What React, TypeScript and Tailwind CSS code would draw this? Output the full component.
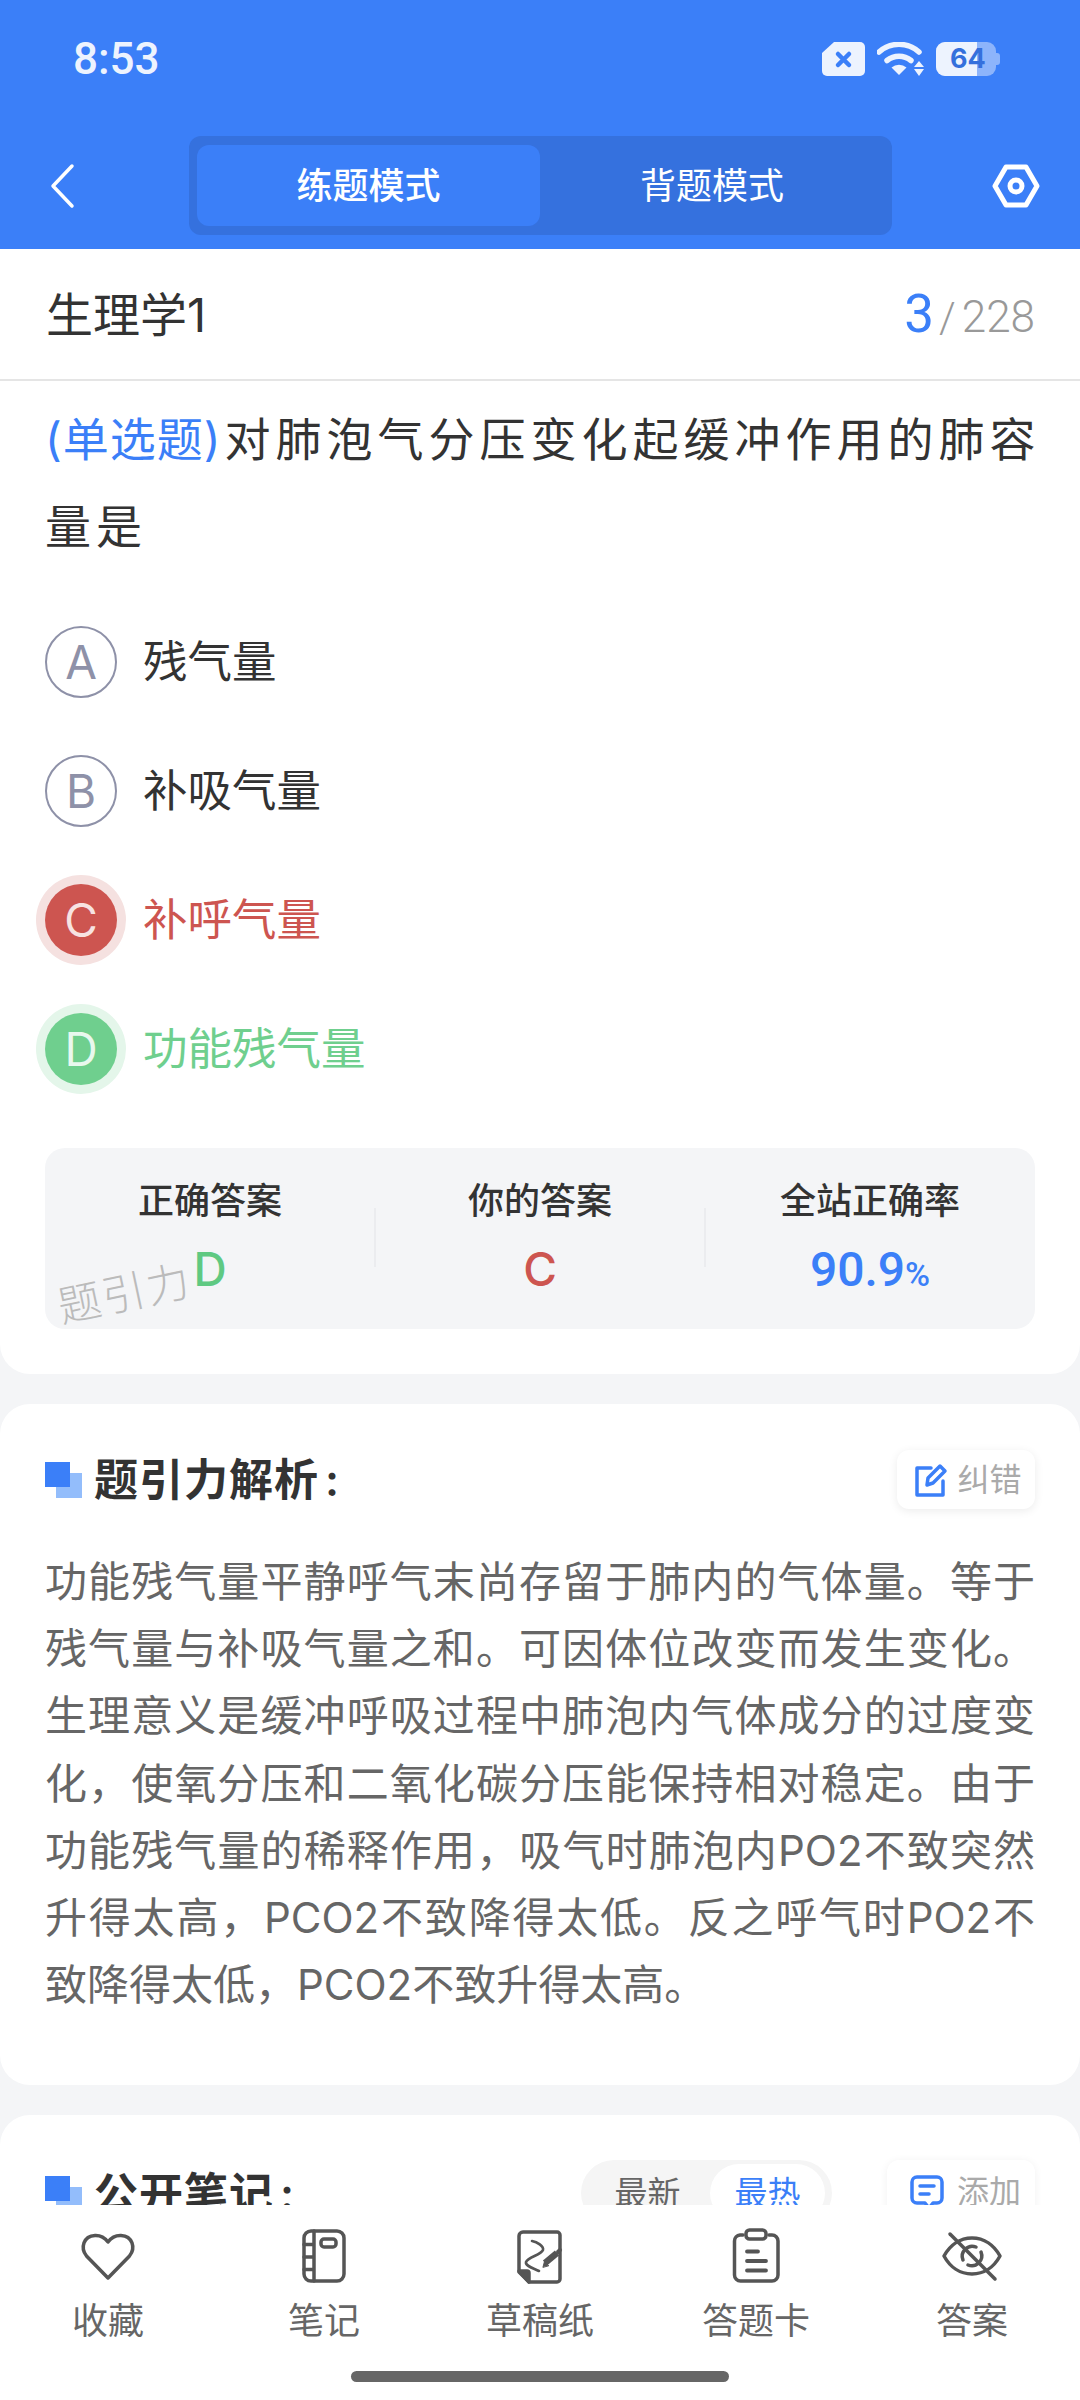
const options = [
  { key: "A", text: "残气量", state: "idle" },
  { key: "B", text: "补吸气量", state: "idle" },
  { key: "C", text: "补呼气量", state: "wrong" },
  { key: "D", text: "功能残气量", state: "right" },
];

const analysis =
  "功能残气量平静呼气末尚存留于肺内的气体量。等于残气量与补吸气量之和。可因体位改变而发生变化。生理意义是缓冲呼吸过程中肺泡内气体成分的过度变化，使氧分压和二氧化碳分压能保持相对稳定。由于功能残气量的稀释作用，吸气时肺泡内PO2不致突然升得太高，PCO2不致降得太低。反之呼气时PO2不致降得太低，PCO2不致升得太高。";

function SectionMark() {
  return (
    <span className="relative block h-[36px] w-[37px] shrink-0">
      <span className="absolute left-[11px] top-[11px] h-[25px] w-[26px] bg-[#93bdfb]" />
      <span className="absolute left-0 top-0 h-[25px] w-[25px] bg-[#3b7ff8]" />
    </span>
  );
}

function StatusIcons() {
  return (
    <div className="flex items-center">
      <svg width="43" height="34" viewBox="0 0 43 34">
        <path d="M12 0H38a5 5 0 0 1 5 5V29a5 5 0 0 1-5 5H5a5 5 0 0 1-5-5V11Z" fill="#edf3fe" />
        <path d="M16 12l11 11M27 12 16 23" stroke="#3b7ff8" strokeWidth="4.5" strokeLinecap="round" />
      </svg>
      <svg className="ml-[12px]" width="47" height="34" viewBox="0 0 47 34">
        <path d="M2 10a30 30 0 0 1 40 0" fill="none" stroke="#edf3fe" strokeWidth="5.5" strokeLinecap="round" />
        <path d="M10 18.5a19 19 0 0 1 24 0" fill="none" stroke="#edf3fe" strokeWidth="5.5" strokeLinecap="round" />
        <path d="M14.500 25.500a12 12 0 0 1 15 0L22 33Z" fill="#edf3fe" />
        <path d="M42 19l5 6H37ZM37 27h10l-5 7Z" fill="#edf3fe" />
      </svg>
      <div className="relative ml-[12px] h-[34px] w-[64px]">
        <div className="absolute left-0 top-0 h-[34px] w-[60px] rounded-[9px] bg-[#8db4fb]" />
        <div className="absolute right-0 top-[11px] h-[12px] w-[4px] rounded-r-[3px] bg-[#8db4fb]" />
        <div className="absolute left-0 top-0 h-[34px] w-[41px] rounded-l-[9px] bg-[#edf3fe]" />
        <div className="absolute left-[14px] top-0 text-[27px] font-bold leading-[34px] text-[#3570dc]">64</div>
      </div>
    </div>
  );
}

function HeartIcon() {
  return (
    <svg width="60" height="60" viewBox="0 0 60 60" fill="none" stroke="#555" strokeWidth="3.500" strokeLinejoin="round">
      <path d="M30 52 8.500 30C2 22 5.500 10 17 9.500 23 9.200 27 12 30 16 33 12 37 9.200 43 9.500 54.500 10 58 22 51.500 30Z" />
    </svg>
  );
}

function NotebookIcon() {
  return (
    <svg width="60" height="60" viewBox="0 0 60 60" fill="none" stroke="#555" strokeWidth="3.500" strokeLinecap="round">
      <rect x="10" y="5" width="40" height="50" rx="7" />
      <path d="M20 5V55M10 18.500H20M10 31H20M10 43.500H20" />
      <rect x="27" y="13" width="15" height="8" rx="3" />
    </svg>
  );
}

function ScratchIcon() {
  return (
    <svg width="60" height="60" viewBox="0 0 60 60" fill="none" stroke="#555" strokeWidth="3.500" strokeLinecap="round" strokeLinejoin="round">
      <path d="M13 6H47a3 3 0 0 1 3 3V53a3 3 0 0 1-3 3H19L9 46V10a4 4 0 0 1 4-4Z" />
      <path d="M9 45H17a2 2 0 0 1 2 2V56Z" fill="#555" />
      <path d="M22 15C27 16 34 20 33 24 31 29 18 31 16 36 15 40 23 42 29 45" strokeWidth="2.600" />
      <path d="M35 37 47 27" strokeWidth="6.500" strokeLinecap="butt" />
      <path d="M33 41 34.500 35.500 38.500 39.500Z" fill="#555" strokeWidth="1" />
      <path d="M48 26 50 24" strokeWidth="4" />
    </svg>
  );
}

function ClipboardIcon() {
  return (
    <svg width="60" height="60" viewBox="0 0 60 60" fill="none" stroke="#555" strokeWidth="3.500" strokeLinecap="round">
      <path d="M17 9h-3a6 6 0 0 0-5.500 6V49a6 6 0 0 0 6 6H46a6 6 0 0 0 6-6V15a6 6 0 0 0-6-6h-3" />
      <rect x="20" y="4" width="20" height="9" rx="3.500" />
      <path d="M21 25.500H32M21 35H40M21 44.500H40" strokeWidth="3.800" />
    </svg>
  );
}

function EyeOffIcon() {
  return (
    <svg width="60" height="60" viewBox="0 0 60 60" fill="none" stroke="#555" strokeWidth="3.500" strokeLinecap="round" strokeLinejoin="round">
      <path d="M2 30C8 19 18 12 30 12 42 12 52 19 58 30 52 41 42 48 30 48 18 48 8 41 2 30Z" />
      <path d="M21 34a10 10 0 0 1 13-13M39 26a10 10 0 0 1-13 13" strokeWidth="3.500" />
      <path d="M8 8 53 53" />
    </svg>
  );
}

const navItems = [
  { label: "收藏", icon: <HeartIcon /> },
  { label: "笔记", icon: <NotebookIcon /> },
  { label: "草稿纸", icon: <ScratchIcon /> },
  { label: "答题卡", icon: <ClipboardIcon /> },
  { label: "答案", icon: <EyeOffIcon /> },
];

function Option({ item }: { item: (typeof options)[number] }) {
  const circle =
    item.state === "wrong"
      ? "bg-[#cd5550] text-[#f7e3e2] shadow-[0_0_0_9px_#f5e1e0]"
      : item.state === "right"
        ? "bg-[#6fcf8e] text-[#e9f8ee] shadow-[0_0_0_9px_#e4f6ea]"
        : "border-2 border-[#8e91a8] text-[#8e91a8]";
  const label =
    item.state === "wrong" ? "text-[#cd5550]" : item.state === "right" ? "text-[#6fcf8e]" : "text-[#333]";
  return (
    <div className="flex h-[72px] items-center">
      <div className={`flex h-[72px] w-[72px] shrink-0 items-center justify-center rounded-full text-[46px] ${circle}`}>
        {item.key}
      </div>
      <div className={`ml-[26px] text-[44.5px] ${label}`}>{item.text}</div>
    </div>
  );
}

function Stat({ label, children }: { label: string; children: React.ReactNode }) {
  return (
    <div className="flex flex-1 flex-col items-center">
      <div className="h-[50px] text-[36px] font-medium leading-[50px] text-[#333]">{label}</div>
      <div className="mt-[18px] h-[50px] text-[46px] font-medium leading-[50px]">{children}</div>
    </div>
  );
}

function StatDivider() {
  return <div className="-mx-px mt-[32px] h-[59px] w-[2px] bg-[#ebecef]" />;
}

export default function App() {
  return (
    <div className="relative h-[2400px] w-[1080px] overflow-hidden bg-[#f4f5f7] font-['Inter','Noto_Sans_CJK_SC',sans-serif]">
      <header className="bg-[#3b7ff8] pb-[14px] text-white">
        <div className="flex h-[136px] items-start justify-between pl-[73px] pr-[80px] pt-[42px]">
          <div className="font-['Roboto',sans-serif] text-[44px] font-medium leading-[34px] text-[#edf3fe]">8:53</div>
          <StatusIcons />
        </div>
        <div className="flex h-[99px] items-center justify-between pl-[44px] pr-[40px]">
          <svg width="45" height="60" viewBox="0 0 45 60" fill="none" stroke="#fff" strokeWidth="3.500" strokeLinecap="round" strokeLinejoin="round">
            <path d="M28 10 9 30 28 50" />
          </svg>
          <div className="flex h-[99px] w-[703px] rounded-[12px] bg-[#3571de] px-[8px] py-[9px]">
            <div className="flex h-[81px] w-[343px] items-center justify-center rounded-[12px] bg-[#3b7ff8] text-[36px] font-medium">
              练题模式
            </div>
            <div className="flex h-[81px] w-[344px] items-center justify-center text-[36px]">背题模式</div>
          </div>
          <svg width="48" height="44" viewBox="0 0 48 44" fill="none" stroke="#fff" strokeWidth="5" strokeLinejoin="round">
            <path d="M14 3H34L45 22 34 41H14L3 22Z" />
            <circle cx="24" cy="22" r="6" />
          </svg>
        </div>
      </header>

      <section className="rounded-b-[30px] bg-white px-[45px] pb-[45px]">
        <div className="-mx-[45px] flex h-[132px] items-center justify-between border-b-2 border-[#e5e5e5] pl-[46px] pr-[45px] pt-[2px]">
          <div className="text-[47px] text-[#333]">生理学1</div>
          <div className="flex items-baseline font-['Roboto',sans-serif] text-[#999]">
            <span className="text-[53px] text-[#3b7ff8]">3</span>
            <span className="ml-[5px] text-[42px] font-light">/</span>
            <span className="ml-[6px] text-[44px] font-light">228</span>
          </div>
        </div>

        <div className="whitespace-nowrap pt-[15px] text-[46px] leading-[87px] text-[#333]">
          <span className="mr-[3px] tracking-[1px] text-[#3b7ff8]">(单选题)</span>
          <span className="tracking-[5px]">
            对肺泡气分压变化起缓冲作用的肺容
            <br />
            量是
          </span>
        </div>

        <div className="mt-[56px] flex flex-col gap-[57px]">
          {options.map((item) => (
            <Option key={item.key} item={item} />
          ))}
        </div>

        <div className="relative mt-[63px] flex h-[181px] rounded-[20px] bg-[#f4f5f7] pt-[28px]">
          <Stat label="正确答案">
            <span className="text-[#5fc982]">D</span>
          </Stat>
          <StatDivider />
          <Stat label="你的答案">
            <span className="text-[#cd5550]">C</span>
          </Stat>
          <StatDivider />
          <Stat label="全站正确率">
            <span className="font-['Roboto',sans-serif] text-[48px] text-[#3b7ff8]">
              90.9<span className="text-[34px]">%</span>
            </span>
          </Stat>
          <div className="absolute left-[12px] top-[120px] -rotate-[12deg] text-[43px] font-light leading-[50px] tracking-[2px] text-[#bbb]">
            题引力
          </div>
        </div>
      </section>

      <section className="mt-[30px] rounded-[30px] bg-white px-[45px] pb-[67px] pt-[45px]">
        <div className="flex items-center justify-between">
          <div className="flex items-center gap-[12px]">
            <SectionMark />
            <div className="mt-[2px] text-[44px] font-semibold leading-[59px] tracking-[1px] text-[#333]">
              题引力解析<span className="ml-[6px]">:</span>
            </div>
          </div>
          <div className="flex h-[59px] w-[138px] items-center justify-center gap-[9px] rounded-[12px] bg-white pl-[4px] text-[32px] text-[#aaa] shadow-[0_2px_10px_rgba(0,0,0,0.08)]">
            <svg width="34" height="34" viewBox="0 0 34 34" fill="none" stroke="#3b7ff8" strokeWidth="3.500" strokeLinecap="round" strokeLinejoin="round">
              <path d="M17 5H3V32H29V18" />
              <path d="M13 22 14 15 26 3 31 8 19 20Z" />
            </svg>
            <span>纠错</span>
          </div>
        </div>
        <p className="mt-[38px] text-justify text-[42px] leading-[67.2px] text-[#666]">{analysis}</p>
      </section>

      <section className="mt-[30px] h-[200px] rounded-t-[30px] bg-white px-[45px] pt-[45px]">
        <div className="flex items-start justify-between">
          <div className="mt-[3px] flex items-center gap-[12px]">
            <SectionMark />
            <div className="mt-[2px] text-[44px] font-semibold leading-[59px] tracking-[1px] text-[#333]">
              公开笔记<span className="ml-[6px]">:</span>
            </div>
          </div>
          <div className="ml-auto flex h-[66px] w-[251px] items-center rounded-full bg-[#f5f5f5] pl-[4px] pr-[7px] text-[33px]">
            <div className="flex-1 text-center text-[#666]">最新</div>
            <div className="flex h-[58px] w-[115px] items-center justify-center rounded-full bg-white text-[#3b7ff8]">最热</div>
          </div>
          <div className="ml-[55px] flex h-[64px] w-[148px] items-center justify-center gap-[12px] rounded-[12px] bg-white pl-[8px] text-[32px] text-[#aaa] shadow-[0_1px_8px_rgba(0,0,0,0.06)]">
            <svg width="36" height="36" viewBox="0 0 36 36" fill="none" stroke="#3b7ff8" strokeWidth="3.500" strokeLinecap="round" strokeLinejoin="round">
              <path d="M8 3H28a5 5 0 0 1 5 5V24a5 5 0 0 1-5 5H24L20 34 16 29H8a5 5 0 0 1-5-5V8a5 5 0 0 1 5-5Z" />
              <path d="M11 12H25M11 20H20" />
            </svg>
            <span>添加</span>
          </div>
        </div>
      </section>

      <nav className="absolute inset-x-0 bottom-0 h-[195px] bg-white">
        <div className="grid grid-cols-5 pt-[21px]">
          {navItems.map((item) => (
            <div key={item.label} className="flex flex-col items-center">
              {item.icon}
              <div className="mt-[10px] text-[36px] leading-[50px] text-[#666]">{item.label}</div>
            </div>
          ))}
        </div>
        <div className="absolute bottom-[18px] left-[351px] h-[11px] w-[378px] rounded-full bg-[#666]" />
      </nav>
    </div>
  );
}
